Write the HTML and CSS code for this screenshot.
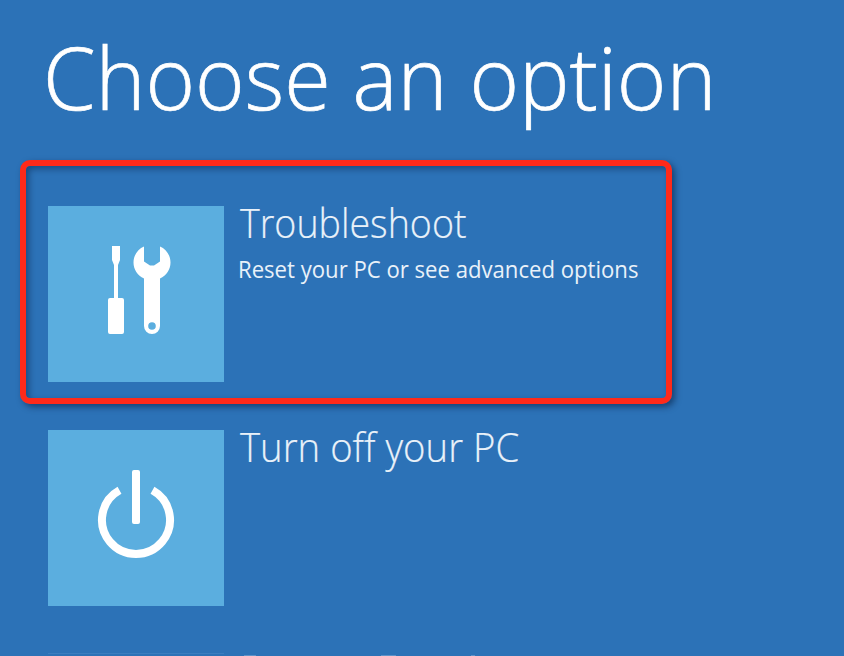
FILE: index.html
```
<!DOCTYPE html>
<html lang="en">
<head>
<meta charset="utf-8">
<title>Choose an option</title>
<link rel="stylesheet" href="styles.css">
</head>
<body>
<main class="screen">
  <h1 class="title">Choose an option</h1>
  <section class="option highlighted">
    <div class="tile">
      <svg class="icon" viewBox="0 0 176 176" aria-hidden="true">
        <path d="M64 40h8v14l-2 5v33h4a2 2 0 0 1 2 2v32a2 2 0 0 1-2 2H62a2 2 0 0 1-2-2V94a2 2 0 0 1 2-2h4V59l-2-5z"/>
        <path fill-rule="evenodd" d="M96 40.500V55.500L102 59.500h4L112 55.500V40.500c6 2.500 10.500 8.500 10.500 16 0 7-4 13-10.500 16V120a8 8 0 0 1-16 0V72.500c-6.500-3-10.500-9-10.500-16 0-7.500 4.500-13.500 10.500-16zM104 116.200a3.800 3.800 0 1 0 0 7.600a3.800 3.800 0 1 0 0-7.600z"/>
      </svg>
    </div>
    <div class="copy">
      <h2 class="name troubleshoot">Troubleshoot</h2>
      <p class="detail">Reset your PC or see advanced options</p>
    </div>
  </section>
  <section class="option">
    <div class="tile">
      <svg class="icon" viewBox="0 0 176 176" aria-hidden="true">
        <rect x="84" y="40" width="8" height="54" rx="2"/>
        <path class="ring" d="M71.500 60.200A34 34 0 1 0 104.500 60.200"/>
      </svg>
    </div>
    <div class="copy">
      <h2 class="name turn-off">Turn off your PC</h2>
    </div>
  </section>
  <section class="next"><div class="next-tile"></div><i class="tip"></i><i class="tip wide"></i><i class="tip dot"></i></section>
</main>
</body>
</html>
```
FILE: styles.css
```
* { box-sizing: border-box; }
html, body { margin: 0; height: 100%; overflow: hidden; }
body { background: #2c72b7; color: #fff; font-family: "Open Sans", "Noto Sans", sans-serif; }
.screen { height: 656px; overflow: hidden; }
.title {
  width: max-content;
  height: 160px;
  margin: 0 0 0 43px;
  padding-top: 17px;
  font-size: 86px;
  font-weight: 300;
  line-height: 120px;
  white-space: nowrap;
  transform: scaleX(.984);
  transform-origin: 0 0;
  -webkit-text-stroke: .7px #fff;
}
.option { display: flex; height: 176px; margin: 0 0 0 48px; }
.highlighted {
  width: 652px;
  height: 244px;
  margin: 0 0 26px 20px;
  padding: 40px 22px;
  border: 6px solid #ff2a1a;
  border-radius: 10px;
  box-shadow: 3px 3px 6px rgba(0, 20, 50, .5), inset 3px 3px 6px rgba(0, 20, 50, .4);
}
.tile { flex: none; width: 176px; height: 176px; background: #5baedf; }
.icon { display: block; width: 176px; height: 176px; fill: #fff; }
.ring { fill: none; stroke: #fff; stroke-width: 8; }
.copy { margin-left: 16px; }
.name, .detail { width: max-content; margin: 0; white-space: nowrap; transform-origin: 0 0; }
.name { height: 47px; font-size: 41px; font-weight: 300; line-height: 32px; color: #e9f1f9; -webkit-text-stroke: .2px #e9f1f9; }
.troubleshoot { transform: scaleX(.917); }
.turn-off { transform: scaleX(.934); }
.detail { height: 32px; margin-left: -2px; font-size: 23px; line-height: 32px; color: #e9f1f9; transform: scaleX(.962); }
.next { display: flex; align-items: flex-end; height: 3px; margin: 47px 0 0 48px; }
.next-tile { width: 176px; height: 3px; border-top: 1px solid #3b7dbf; }
.tip { width: 12px; height: 1px; margin-left: 20px; background: #5d93c9; }
.wide { width: 15px; margin-left: 125px; }
.dot { width: 4px; margin-left: 75px; }
```
